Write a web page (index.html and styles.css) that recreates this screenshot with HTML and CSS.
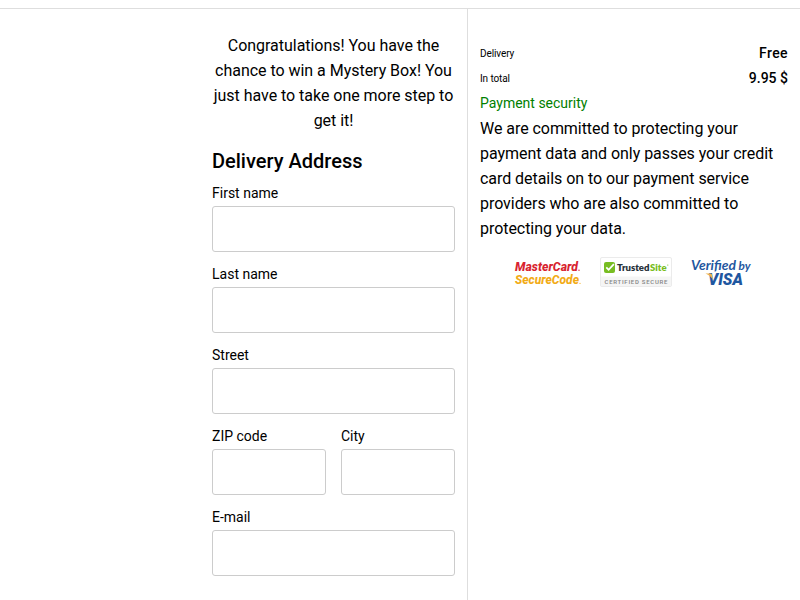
FILE: index.html
```html
<!DOCTYPE html>
<html lang="en">
<head>
<meta charset="utf-8">
<title>Delivery Address</title>
<link rel="stylesheet" href="styles.css">
</head>
<body>
<main class="checkout">
  <form class="address">
    <p class="intro">Congratulations! You have the chance to win a Mystery Box! You just have to take one more step to get it!</p>
    <h1 class="title">Delivery Address</h1>
    <label class="field">First name<input class="input" type="text"></label>
    <label class="field">Last name<input class="input" type="text"></label>
    <label class="field">Street<input class="input" type="text"></label>
    <div class="row">
      <label class="field">ZIP code<input class="input" type="text"></label>
      <label class="field">City<input class="input" type="text"></label>
    </div>
    <label class="field">E-mail<input class="input" type="text"></label>
  </form>
  <aside class="summary">
    <div class="line"><span class="line-name">Delivery</span><span class="line-value line-free">Free</span></div>
    <div class="line"><span class="line-name">In total</span><span class="line-value">9.95 $</span></div>
    <div class="security">Payment security</div>
    <p class="note">We are committed to protecting your payment data and only passes your credit card details on to our payment service providers who are also committed to protecting your data.</p>
    <div class="badges">
      <svg class="badge-mastercard" width="70" height="32" viewBox="0 0 70 32">
        <g class="logo-condensed">
          <text x="1" y="15" fill="#d8232f" textLength="63" lengthAdjust="spacingAndGlyphs">MasterCard</text>
          <text x="1" y="28" fill="#f2ab16" textLength="64" lengthAdjust="spacingAndGlyphs">SecureCode</text>
        </g>
        <circle cx="65" cy="14.3" r=".7" fill="#d8232f"/>
        <circle cx="66" cy="27.3" r=".6" fill="#f2ab16"/>
      </svg>
      <svg class="badge-trusted" width="72" height="32" viewBox="0 0 72 32">
        <rect x=".5" y="1.5" width="71" height="29" rx="1.5" fill="#fff" stroke="#ebebeb"/>
        <path d="M1 20.5h70V30H1z" fill="#f5f5f5"/>
        <rect x="4" y="6" width="11" height="11" rx="2" fill="#78bd22"/>
        <path d="M6.3 11.4l2.3 2.4 5.3-5.6" fill="none" stroke="#fff" stroke-width="1.8"/>
        <text class="logo-trusted" x="17" y="15" fill="#27313a" textLength="32.5" lengthAdjust="spacingAndGlyphs">Trusted</text>
        <text class="logo-trusted" x="50" y="15" fill="#78bd22" textLength="16.5" lengthAdjust="spacingAndGlyphs">Site</text>
        <circle cx="67.8" cy="9" r=".6" fill="#78bd22"/>
        <text class="logo-certified" x="4.5" y="28" fill="#858585" textLength="63">CERTIFIED SECURE</text>
      </svg>
      <svg class="badge-visa" width="64" height="32" viewBox="0 0 64 32">
        <text class="logo-verified" x="1" y="14" fill="#1f57a0" textLength="45" lengthAdjust="spacingAndGlyphs">Verified</text>
        <text class="logo-by" x="48.5" y="14" fill="#1f57a0" textLength="12" lengthAdjust="spacingAndGlyphs">by</text>
        <text class="logo-visa" x="18" y="29" fill="#1f57a0" textLength="35" lengthAdjust="spacingAndGlyphs">VISA</text>
        <path d="M15.5 17.5h5q1.2 0 1.5 1.2l1 5.3q-2.2-4.5-7.5-6.5z" fill="#eeb24c"/>
      </svg>
    </div>
  </aside>
</main>
</body>
</html>
```
FILE: styles.css
```css
* {
  box-sizing: border-box;
}

body {
  margin: 0;
  padding-top: 8px;
  height: 600px;
  overflow: hidden;
  background: #fff;
  color: #000;
  font: 16px/25px Roboto, sans-serif;
}

.checkout {
  display: grid;
  grid-template-columns: 468px 1fr;
  height: 592px;
  border-top: 1px solid #dedede;
}

.address {
  padding: 24px 12px 0 212px;
  border-right: 1px solid #dedede;
}

.intro {
  margin: 0 0 16px;
  text-align: center;
  letter-spacing: -0.03px;
}

.title {
  margin: 0 0 7px;
  font-size: 20px;
  font-weight: 500;
  line-height: 25px;
}

.field {
  display: block;
  margin-bottom: 10px;
  font-size: 14px;
}

.input {
  display: block;
  width: 100%;
  height: 46px;
  padding: 0 12px;
  border: 1px solid #ccc;
  border-radius: 3px;
  background: #fff;
  font: inherit;
}

.row {
  display: grid;
  grid-template-columns: 1fr 1fr;
  gap: 15px;
}

.summary {
  padding: 32px 12px 0;
}

.line {
  display: flex;
  justify-content: space-between;
  height: 25px;
}

.line-name {
  font-size: 10px;
  letter-spacing: -0.1px;
}

.line-value {
  font-size: 14px;
  font-weight: 500;
}

.line-free {
  letter-spacing: 0.4px;
}

.security {
  color: #008000;
  font-size: 14px;
}

.note {
  margin: 0;
  letter-spacing: -0.05px;
}

.badges {
  display: flex;
  margin: 15px 0 0 34px;
}

.badge-trusted {
  margin: 0 18px 0 16px;
}

.badges svg {
  overflow: visible;
}

.logo-condensed {
  font: italic 800 12.5px Roboto, sans-serif;
}

.logo-trusted {
  font: 800 9.5px Lato, sans-serif;
}

.logo-certified {
  font: 500 6px Roboto, sans-serif;
}

.logo-verified {
  font: italic 700 13.5px Lato, sans-serif;
}

.logo-by {
  font: italic 700 11px Lato, sans-serif;
}

.logo-visa {
  font: italic 900 16px Roboto, sans-serif;
}
```
